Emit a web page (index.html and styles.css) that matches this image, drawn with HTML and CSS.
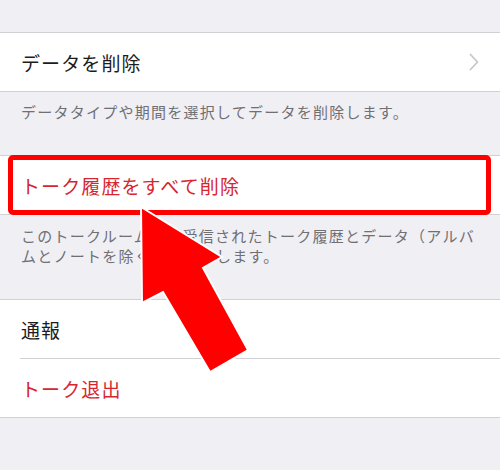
FILE: index.html
```html
<!DOCTYPE html>
<html lang="ja">
<head>
<meta charset="utf-8">
<link rel="stylesheet" href="styles.css">
</head>
<body>
<div class="page">
  <div class="top-space"></div>
  <div class="group">
    <div class="row">
      <span class="label">データを削除</span>
      <svg class="chev" width="10" height="18" viewBox="0 0 10 18"><path d="M1.5 1.5 L8.5 9 L1.5 16.5" fill="none" stroke="#c7c7cc" stroke-width="1.8" stroke-linecap="round" stroke-linejoin="round"/></svg>
    </div>
  </div>
  <div class="desc desc1">データタイプや期間を選択してデータを削除します。</div>
  <div class="group">
    <div class="row"><span class="label red">トーク履歴をすべて削除</span></div>
  </div>
  <div class="desc desc2">このトークルームで送受信されたトーク履歴とデータ（アルバムとノートを除く）を削除します。</div>
  <div class="group">
    <div class="row sep"><span class="label">通報</span></div>
    <div class="row"><span class="label red">トーク退出</span></div>
  </div>

  <div class="highlight"></div>
  <svg class="arrow" width="500" height="470" viewBox="0 0 500 470">
    <polygon points="141,207 142,303 163,292 210,372 248,350 203,268 222,257" fill="#ff0000" stroke="#ffffff" stroke-width="2" stroke-linejoin="miter"/>
  </svg>
</div>
</body>
</html>
```

FILE: styles.css
```css
html, body {
  margin: 0;
  padding: 0;
}
body {
  background: #efeff4;
  font-family: "Noto Sans CJK JP", "Noto Sans", sans-serif;
  width: 500px;
  height: 470px;
  overflow: hidden;
}
.page {
  position: relative;
  width: 500px;
  height: 470px;
}
.top-space {
  height: 32px;
}
.group {
  background: #ffffff;
  border-top: 1px solid #d0d0d5;
  border-bottom: 1px solid #d0d0d5;
}
.row {
  height: 58px;
  display: flex;
  align-items: center;
  justify-content: space-between;
  padding: 0 21px 0 21px;
  box-sizing: border-box;
}
.row.sep {
  height: 59px;
  border-bottom: 1px solid #d0d0d5;
  margin-left: 20px;
  padding-left: 1px;
}
.label {
  font-size: 19px;
  letter-spacing: 1.1px;
  color: #1c1c1c;
}
.label.red {
  color: #d7262f;
}
.chev {
  display: block;
}
.desc {
  color: #6f6f74;
  font-size: 15px;
  letter-spacing: 1.25px;
  line-height: 20px;
  padding: 0 21px;
}
.desc1 {
  padding-top: 10px;
  height: 53px;
}
.desc2 {
  padding-top: 11px;
  height: 73px;
}
.highlight {
  position: absolute;
  left: 8px;
  top: 155px;
  width: 483px;
  height: 60px;
  box-sizing: border-box;
  border: 5px solid #ff0000;
  border-radius: 5px;
}
.arrow {
  position: absolute;
  left: 0;
  top: 0;
}
```
